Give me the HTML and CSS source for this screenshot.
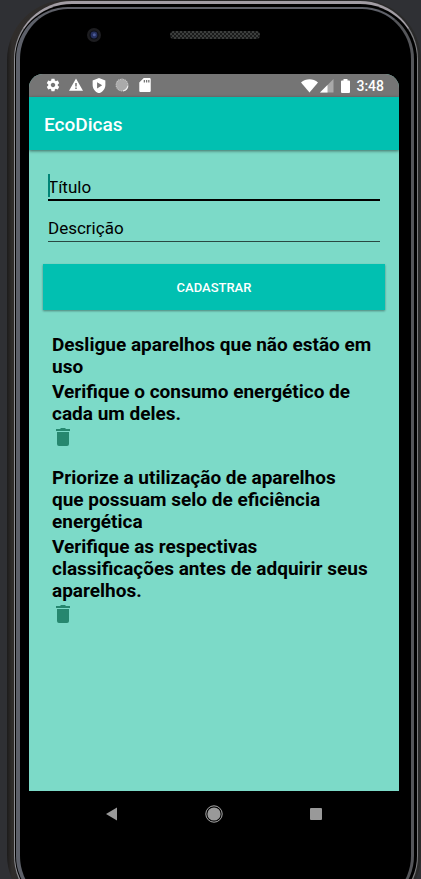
FILE: index.html
```html
<!DOCTYPE html>
<html lang="pt-BR">
<head>
<meta charset="utf-8">
<meta name="viewport" content="width=device-width, initial-scale=1">
<title>EcoDicas</title>
<link rel="stylesheet" href="styles.css">
</head>
<body>
<div class="phone">
  <div class="earpiece">
    <svg class="camera" viewBox="0 0 14 14" aria-hidden="true">
      <circle cx="7" cy="7" r="7" fill="#1d1d20"/>
      <circle cx="7" cy="7" r="4.6" fill="#0c0e16"/>
      <circle cx="7" cy="7" r="3.4" fill="#252f5c"/>
      <circle cx="7.3" cy="6.8" r="1.5" fill="#4c5c98"/>
    </svg>
    <span class="speaker"></span>
  </div>

  <div class="screen">
    <div class="status">
      <div class="status-icons">
        <svg viewBox="1 1 22 22" aria-hidden="true"><path fill="#fff" d="M19.43 12.98c.04-.32.07-.64.07-.98s-.03-.66-.07-.98l2.11-1.65c.19-.15.24-.42.12-.64l-2-3.46c-.12-.22-.39-.3-.61-.22l-2.49 1c-.52-.4-1.08-.73-1.69-.98l-.38-2.65C14.46 2.18 14.25 2 14 2h-4c-.25 0-.46.18-.49.42l-.38 2.65c-.61.25-1.17.59-1.69.98l-2.49-1c-.23-.09-.49 0-.61.22l-2 3.46c-.13.22-.07.49.12.64l2.11 1.65c-.04.32-.07.65-.07.98s.03.66.07.98l-2.11 1.65c-.19.15-.24.42-.12.64l2 3.46c.12.22.39.3.61.22l2.49-1c.52.4 1.08.73 1.69.98l.38 2.65c.03.24.24.42.49.42h4c.25 0 .46-.18.49-.42l.38-2.65c.61-.25 1.17-.59 1.69-.98l2.49 1c.23.09.49 0 .61-.22l2-3.46c.12-.22.07-.49-.12-.64l-2.11-1.65zM12 15.5c-1.93 0-3.500-1.570-3.500-3.500s1.570-3.500 3.500-3.500 3.500 1.570 3.500 3.500-1.570 3.500-3.500 3.500z"/></svg>
        <svg viewBox="0 0 24 24" aria-hidden="true"><path fill="#fff" d="M0 22h24L12 1 0 22zm13.300-3h-2.600v-2.600h2.600V19zm0-4.600h-2.600V8.500h2.600v5.900z"/></svg>
        <svg viewBox="1 0 22 24" aria-hidden="true"><path fill="#fff" fill-rule="evenodd" d="M12 0L2 4v7c0 6 4.200 11 10 13 5.800-2 10-7 10-13V4L12 0zM9 6.500l8 5-8 5z"/></svg>
        <svg viewBox="0 0 24 24" aria-hidden="true"><circle cx="12" cy="12" r="10" fill="#aaa" stroke="#c4c4c4" stroke-width="2" stroke-dasharray="2 1"/><path d="M22 14A10 10 0 0 1 14 22" fill="none" stroke="#eee" stroke-width="2"/></svg>
        <svg viewBox="1 1 22 22" aria-hidden="true"><path fill="#fff" d="M19 1h-9L3 8v13c0 1.100.9 2 2 2h14c1.100 0 2-.9 2-2V3c0-1.100-.9-2-2-2zm-7 7h-2V4h2v4zm3.500 0h-2V4h2v4zm3.500 0h-2V4h2v4z"/></svg>
      </div>
      <div class="status-right">
        <svg class="signal" viewBox="0 0 34 14" aria-hidden="true">
          <path fill="#fff" d="M0 3.500C5-.7 12-.7 17 3.500L8.500 13.500z"/>
          <path fill="#a9a9a9" d="M19 13.500h13.500V0z"/>
          <path fill="#fff" d="M19 13.500h7.500V6z"/>
        </svg>
        <svg class="battery" viewBox="0 0 9 14" aria-hidden="true"><path fill="#fff" d="M2.500 0h4v1.500H8q1 0 1 1V13q0 1-1 1H1q-1 0-1-1V2.500q0-1 1-1h1.500z"/></svg>
        <span>3:48</span>
      </div>
    </div>

    <header class="appbar"><h1>EcoDicas</h1></header>

    <main class="content">
      <form class="form">
        <div class="field active"><input type="text" placeholder="Título" aria-label="Título"></div>
        <div class="field"><input type="text" placeholder="Descrição" aria-label="Descrição"></div>
        <button class="submit" type="button">CADASTRAR</button>
      </form>
      <ul class="tips">
        <li>
          <h2>Desligue aparelhos que não estão em uso</h2>
          <p>Verifique o consumo energético de cada um deles.</p>
          <button class="delete" type="button" aria-label="Excluir">
            <svg viewBox="0 0 14 18" aria-hidden="true"><path fill="#26876f" d="M1 4h12v12q0 2-2 2H3q-2 0-2-2zM0 1h4l1-1h4l1 1h4v2H0z"/></svg>
          </button>
        </li>
        <li>
          <h2>Priorize a utilização de aparelhos que possuam selo de eficiência energética</h2>
          <p>Verifique as respectivas classificações antes de adquirir seus aparelhos.</p>
          <button class="delete" type="button" aria-label="Excluir">
            <svg viewBox="0 0 14 18" aria-hidden="true"><path fill="#26876f" d="M1 4h12v12q0 2-2 2H3q-2 0-2-2zM0 1h4l1-1h4l1 1h4v2H0z"/></svg>
          </button>
        </li>
      </ul>
    </main>
  </div>

  <nav class="navbar">
    <button type="button" aria-label="Voltar"><svg viewBox="0 0 18 18"><path fill="#999" d="M3 9L14 2.500v13z"/></svg></button>
    <button type="button" aria-label="Início"><svg viewBox="0 0 18 18"><circle cx="9" cy="9" r="8.200" fill="none" stroke="#aaa"/><circle cx="9" cy="9" r="6.600" fill="#999"/></svg></button>
    <button type="button" aria-label="Recentes"><svg viewBox="0 0 18 18"><rect x="3" y="3" width="12" height="12" rx="1" fill="#999"/></svg></button>
  </nav>
</div>
</body>
</html>
```
FILE: styles.css
```css
* {
  box-sizing: border-box;
}

body {
  margin: 0;
  height: 100vh;
  overflow: hidden;
  background: #2f3034;
  font-family: Roboto, "Liberation Sans", sans-serif;
}

h1, h2, p, ul {
  margin: 0;
  padding: 0;
}

button {
  border: 0;
  padding: 0;
  font-family: inherit;
}

svg {
  display: block;
}

/* Device body; its lower edge runs past the bottom of the window */
.phone {
  position: relative;
  isolation: isolate;
  display: flex;
  flex-direction: column;
  min-height: calc(100vh + 36px);
  margin-left: 7px;
  padding: 0 22px 78px;
  border-radius: 60px;
  background: linear-gradient(90deg, #1c1b1b, #302d2b 5px, #252424 50%, #2a2a2a);
}

/* Metal rim and glass edge */
.phone::before,
.phone::after {
  content: "";
  position: absolute;
  z-index: -1;
  background: #000;
}

.phone::before {
  inset: 1px 3px 1px 7px;
  border: solid;
  border-width: 3px 1px 3px 1px;
  border-color: #a29da4 #7c7c7e #a29da4 #8d8d92;
  border-radius: 58px;
}

.phone::after {
  inset: 7px 7px 7px 9px;
  border: solid;
  border-width: 2px 3px 2px 4px;
  border-color: #5f6169 #55565a #5f6169 #5d6069;
  border-radius: 52px;
}

.earpiece {
  display: grid;
  grid-template-columns: 1fr 90px 1fr;
  align-items: center;
  height: 74px;
  padding: 0 0 4px 2px;
}

.camera {
  width: 14px;
  margin-left: 56px;
}

.speaker {
  height: 8px;
  border-radius: 4px;
  background: repeating-conic-gradient(#3c3e3d 0 25%, #1a1b1b 0 50%) 0 0 / 4px 4px;
}

.screen {
  flex: 1;
  display: flex;
  flex-direction: column;
  overflow: hidden;
  border-radius: 14px 14px 0 0;
  background: #7cdac8;
}

.status {
  display: flex;
  justify-content: space-between;
  align-items: center;
  height: 23px;
  padding: 0 15px 0 17px;
  background: #757575;
  color: #fff;
  font-size: 14px;
  font-weight: 500;
}

.status-icons,
.status-right {
  display: flex;
  align-items: center;
}

.status-icons {
  gap: 9px;
}

.status-icons svg {
  width: 14px;
}

.signal {
  width: 34px;
  margin-right: 6px;
}

.battery {
  width: 9px;
  margin-right: 6px;
}

.appbar {
  display: flex;
  align-items: center;
  height: 53px;
  padding: 2px 15px 0;
  background: #01c0b1;
  box-shadow: 0 1px 3px rgba(0, 0, 0, 0.5);
  color: #fff;
}

.appbar h1 {
  font-size: 19px;
  font-weight: 500;
}

.content {
  padding: 20px 14px;
}

.form {
  display: flex;
  flex-direction: column;
  gap: 10px;
}

.field {
  position: relative;
  margin: 0 5px;
  height: 31px;
  border-bottom: 1px solid #294842;
}

.field.active {
  border-bottom: 2px solid #000;
}

/* Text caret */
.field.active::before {
  content: "";
  position: absolute;
  left: 0;
  top: 4px;
  width: 2px;
  height: 23px;
  background: #018577;
}

.field input {
  display: block;
  width: 100%;
  height: 100%;
  padding: 4px 0 0;
  border: 0;
  outline: 0;
  background: transparent;
  color: #000;
  font: 17px Roboto, "Liberation Sans", sans-serif;
}

.field input::placeholder {
  color: #000;
  opacity: 1;
}

.submit {
  height: 46px;
  margin-top: 12px;
  background: #01c0b1;
  box-shadow: 0 1px 2px rgba(0, 0, 0, 0.4);
  color: #fff;
  font-size: 13px;
  font-weight: 500;
}

.tips {
  display: flex;
  flex-direction: column;
  gap: 18px;
  margin: 24px 13px 0 9px;
  list-style: none;
}

.tips h2,
.tips p {
  color: #000;
  font-size: 19px;
  font-weight: 700;
  line-height: 22px;
}

.tips p {
  margin-top: 3px;
}

.delete {
  display: grid;
  place-items: center;
  width: 22px;
  height: 24px;
  background: transparent;
}

.delete svg {
  width: 14px;
}

.navbar {
  display: flex;
  justify-content: center;
  align-items: center;
  gap: 84px;
  height: 46px;
}

.navbar button {
  background: transparent;
}

.navbar svg {
  width: 18px;
}
```
